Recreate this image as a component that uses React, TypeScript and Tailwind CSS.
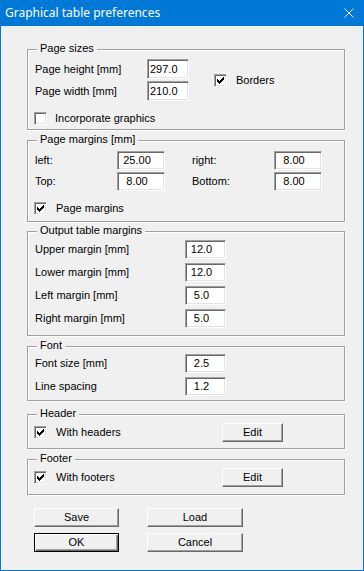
import React from 'react';

const Field: React.FC<{ value: string; w: string; h?: string; align?: 'left' | 'center' }> = ({
  value,
  w,
  h = 'h-[19px]',
  align = 'center',
}) => (
  <div
    className={`${w} ${h} bg-white border border-t-[#a0a0a0] border-l-[#a0a0a0] border-b-white border-r-white shadow-[inset_1px_1px_0_#696969,inset_-1px_-1px_0_#e3e3e3] flex items-center leading-none ${
      align === 'left' ? 'justify-start pl-[2px]' : 'justify-center pr-[8px]'
    }`}
  >
    {value}
  </div>
);

const Check: React.FC<{ checked?: boolean }> = ({ checked }) => (
  <div className="w-[13px] h-[13px] shrink-0 bg-white border border-t-[#a0a0a0] border-l-[#a0a0a0] border-b-white border-r-white shadow-[inset_1px_1px_0_#696969,inset_-1px_-1px_0_#e3e3e3] flex items-center justify-center">
    {checked && (
      <svg width="7" height="7" viewBox="0 0 7 7" shapeRendering="crispEdges">
        <path
          d="M0 2h1v3h-1zM1 3h1v3h-1zM2 4h1v3h-1zM3 3h1v3h-1zM4 2h1v3h-1zM5 1h1v3h-1zM6 0h1v3h-1z"
          fill="#000"
        />
      </svg>
    )}
  </div>
);

const Button: React.FC<{ label: string; w: string; isDefault?: boolean }> = ({ label, w, isDefault }) =>
  isDefault ? (
    <div className={`${w} h-[19px] bg-[#f0f0f0] border border-black shadow-[inset_1px_1px_0_#fff,inset_-1px_-1px_0_#696969,inset_-2px_-2px_0_#a0a0a0] flex items-center justify-center`}>
      {label}
    </div>
  ) : (
    <div className={`${w} h-[19px] bg-[#f0f0f0] border border-t-white border-l-white border-b-[#696969] border-r-[#696969] shadow-[inset_-1px_-1px_0_#a0a0a0] flex items-center justify-center`}>
      {label}
    </div>
  );

const Group: React.FC<{ title: string; className: string; children: React.ReactNode }> = ({
  title,
  className,
  children,
}) => (
  <div
    className={`relative w-[318px] border border-[#a0a0a0] shadow-[inset_1px_1px_0_#fff,1px_1px_0_#fff] pl-[7px] ${className}`}
  >
    <span className="absolute -top-[8px] left-[9px] px-[3px] bg-[#f0f0f0] leading-[13px]">{title}</span>
    {children}
  </div>
);

export default function App() {
  return (
    <div className="w-[364px] h-[571px] bg-[#f0f0f0] border border-t-0 border-[#0078d7] flex flex-col text-[11px] text-black font-['Liberation_Sans',Arial,sans-serif]">
      <div className="h-[26px] shrink-0 bg-[#0078d7] flex items-center justify-between pl-[4px] pr-[9px] text-white text-[12px] font-['Noto_Sans',sans-serif]">
        <span>Graphical table preferences</span>
        <svg width="10" height="10" viewBox="0 0 10 10">
          <path d="M0.5 0.5l9 9M9.5 0.5l-9 9" stroke="#fff" strokeWidth="1" />
        </svg>
      </div>

      <div className="flex flex-col pl-[26px]">
        <Group title="Page sizes" className="mt-[23px] h-[81px] pt-[9px]">
          <div className="flex items-center">
            <div className="flex flex-col gap-[2px]">
              <div className="flex items-center">
                <span className="w-[112px]">Page height [mm]</span>
                <Field value="297.0" w="w-[42px]" h="h-[20px]" align="left" />
              </div>
              <div className="flex items-center">
                <span className="w-[112px]">Page width [mm]</span>
                <Field value="210.0" w="w-[42px]" h="h-[20px]" align="left" />
              </div>
            </div>
            <div className="ml-[25px] flex items-center gap-[9px]">
              <Check checked />
              <span>Borders</span>
            </div>
          </div>
          <div className="mt-[9px] -ml-[1px] flex items-center gap-[8px]">
            <Check />
            <span>Incorporate graphics</span>
          </div>
        </Group>

        <Group title="Page margins [mm]" className="mt-[10px] h-[82px] pt-[10px]">
          <div className="flex flex-col gap-[2px]">
            <div className="flex items-center">
              <span className="w-[82px]">left:</span>
              <Field value="25.00" w="w-[48px]" />
              <span className="ml-[27px] w-[82px]">right:</span>
              <Field value="8.00" w="w-[48px]" />
            </div>
            <div className="flex items-center">
              <span className="w-[82px]">Top:</span>
              <Field value="8.00" w="w-[48px]" />
              <span className="ml-[27px] w-[82px]">Bottom:</span>
              <Field value="8.00" w="w-[48px]" />
            </div>
          </div>
          <div className="mt-[9px] -ml-[1px] flex items-center gap-[9px]">
            <Check checked />
            <span>Page margins</span>
          </div>
        </Group>

        <Group title="Output table margins" className="mt-[9px] h-[105px] pt-[8px]">
          <div className="flex flex-col gap-[4px]">
            {[
              ['Upper margin [mm]', '12.0'],
              ['Lower margin [mm]', '12.0'],
              ['Left margin [mm]', '5.0'],
              ['Right margin [mm]', '5.0'],
            ].map(([label, value]) => (
              <div key={label} className="flex items-center">
                <span className="w-[150px]">{label}</span>
                <Field value={value} w="w-[41px]" />
              </div>
            ))}
          </div>
        </Group>

        <Group title="Font" className="mt-[10px] h-[55px] pt-[7px]">
          <div className="flex flex-col gap-[4px]">
            <div className="flex items-center">
              <span className="w-[150px]">Font size [mm]</span>
              <Field value="2.5" w="w-[41px]" />
            </div>
            <div className="flex items-center">
              <span className="w-[150px]">Line spacing</span>
              <Field value="1.2" w="w-[41px]" />
            </div>
          </div>
        </Group>

        <Group title="Header" className="mt-[13px] h-[35px] pt-[8px]">
          <div className="flex items-center -ml-[1px]">
            <div className="w-[188px] flex items-center gap-[9px]">
              <Check checked />
              <span>With headers</span>
            </div>
            <Button label="Edit" w="w-[61px]" />
          </div>
        </Group>

        <Group title="Footer" className="mt-[10px] h-[36px] pt-[8px]">
          <div className="flex items-center -ml-[1px]">
            <div className="w-[188px] flex items-center gap-[9px]">
              <Check checked />
              <span>With footers</span>
            </div>
            <Button label="Edit" w="w-[61px]" />
          </div>
        </Group>

        <div className="mt-[13px] ml-[7px] flex flex-col gap-[6px]">
          <div className="flex gap-[28px]">
            <Button label="Save" w="w-[85px]" />
            <Button label="Load" w="w-[96px]" />
          </div>
          <div className="flex gap-[28px]">
            <Button label="OK" w="w-[85px]" isDefault />
            <Button label="Cancel" w="w-[96px]" />
          </div>
        </div>
      </div>
    </div>
  );
}
